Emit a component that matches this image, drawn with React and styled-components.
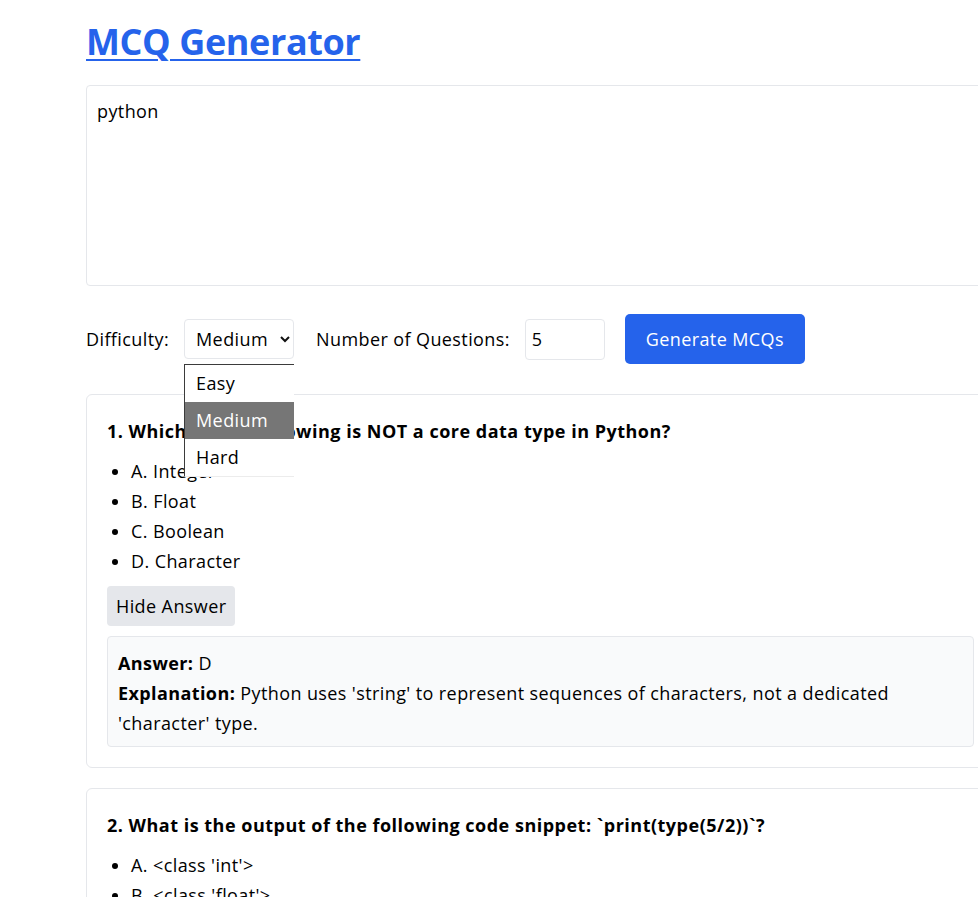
import React from "react";
import styled, { createGlobalStyle } from "styled-components";

const Global = createGlobalStyle`
  html, body { margin: 0; padding: 0; background: #ffffff; }
  body {
    font-family: "Open Sans", "Noto Sans", "DejaVu Sans", sans-serif;
    color: #000000;
    overflow: hidden;
  }
  * { box-sizing: border-box; }
`;

const Page = styled.main`
  width: 909px;
  margin-left: 86px;
  padding-top: 20px;
  font-size: 18px;
  line-height: 30px;
  letter-spacing: 0.4px;
`;

const Title = styled.h1`
  margin: 0 0 21px;
  font-size: 36px;
  line-height: 44px;
  font-weight: 700;
  letter-spacing: -0.4px;
`;

const TitleLink = styled.a`
  color: #2563eb;
  text-decoration: underline;
  text-decoration-thickness: 2px;
  text-underline-offset: 4px;
`;

const TopicInput = styled.textarea`
  display: block;
  width: 100%;
  height: 201px;
  padding: 10px;
  border: 1px solid #e5e7eb;
  border-radius: 4px;
  font: inherit;
  font-size: 18px;
  line-height: 30px;
  letter-spacing: inherit;
  color: #000;
  resize: none;
  outline: none;
`;

const Controls = styled.div`
  display: flex;
  align-items: center;
  height: 50px;
  margin-top: 28px;
`;

const Label = styled.label`
  font-size: 18px;
  margin-right: 15px;
  white-space: nowrap;
`;

const SelectWrap = styled.div`
  position: relative;
  width: 110px;
  height: 40px;
  margin-right: 22px;
`;

const Select = styled.select`
  appearance: none;
  width: 100%;
  height: 100%;
  padding: 0 0 0 11px;
  border: 1px solid #e5e7eb;
  border-radius: 4px;
  background: #fff;
  font: inherit;
  font-size: 18px;
  letter-spacing: inherit;
  color: #000;
  outline: none;
`;

const Chevron = styled.svg`
  position: absolute;
  right: 3px;
  top: 16px;
  pointer-events: none;
`;

const OptionList = styled.ul`
  position: absolute;
  top: 45px;
  left: 0;
  width: 110px;
  margin: 0;
  padding: 0;
  list-style: none;
  background: #fff;
  border-top: 1px solid #3b3b3b;
  border-left: 1px solid #3b3b3b;
  border-bottom: 1px solid #ececec;
  z-index: 10;
`;

const OptionItem = styled.li`
  height: 37px;
  line-height: 37px;
  padding-left: 11px;
  font-size: 18px;
  background: ${(p) => (p.$active ? "#767676" : "#ffffff")};
  color: ${(p) => (p.$active ? "#ffffff" : "#000000")};
`;

const NumberInput = styled.input`
  width: 80px;
  height: 41px;
  margin-right: 20px;
  padding: 0 0 0 6px;
  border: 1px solid #e5e7eb;
  border-radius: 4px;
  font: inherit;
  font-size: 18px;
  letter-spacing: inherit;
  color: #000;
  outline: none;
`;

const PrimaryButton = styled.button`
  width: 180px;
  height: 50px;
  border: none;
  border-radius: 5px;
  background: #2563eb;
  color: #ffffff;
  font: inherit;
  font-size: 18px;
  letter-spacing: inherit;
`;

const Cards = styled.div`
  display: flex;
  flex-direction: column;
  gap: 20px;
  margin-top: 30px;
`;

const Card = styled.section`
  border: 1px solid #e5e7eb;
  border-radius: 6px;
  padding: 20px;
`;

const Question = styled.h3`
  margin: 1px 0 10px;
  font-size: 18px;
  line-height: 30px;
  font-weight: 700;
  letter-spacing: 0.5px;
`;

const Choices = styled.ul`
  margin: 0 0 10px;
  padding-left: 24px;
`;

const Choice = styled.li`
  line-height: 30px;
`;

const ToggleButton = styled.button`
  display: block;
  height: 40px;
  padding: 0 9px;
  border: none;
  border-radius: 4px;
  background: #e5e7eb;
  color: #000;
  font: inherit;
  font-size: 18px;
  letter-spacing: inherit;
`;

const AnswerBox = styled.div`
  margin-top: 10px;
  padding: 11px 10px 8px;
  border: 1px solid #e5e7eb;
  border-radius: 4px;
  background: #f9fafb;
`;

const AnswerLine = styled.div`
  line-height: 30px;
`;

const questions = [
  {
    q: "1. Which of the following is NOT a core data type in Python?",
    options: ["A. Integer", "B. Float", "C. Boolean", "D. Character"],
    open: true,
    answer: "D",
    explanation:
      "Python uses 'string' to represent sequences of characters, not a dedicated 'character' type.",
  },
  {
    q: "2. What is the output of the following code snippet: `print(type(5/2))`?",
    options: ["A. <class 'int'>", "B. <class 'float'>", "C. <class 'double'>", "D. <class 'decimal'>"],
    open: false,
  },
];

export default function App() {
  return (
    <>
      <Global />
      <Page>
        <Title>
          <TitleLink href="#">MCQ Generator</TitleLink>
        </Title>
        <TopicInput defaultValue="python" />
        <Controls>
          <Label>Difficulty:</Label>
          <SelectWrap>
            <Select defaultValue="medium">
              <option value="easy">Easy</option>
              <option value="medium">Medium</option>
              <option value="hard">Hard</option>
            </Select>
            <Chevron width="12" height="8" viewBox="0 0 12 8">
              <polyline points="2,2 6,6 10,2" fill="none" stroke="#111" strokeWidth="2" />
            </Chevron>
            <OptionList>
              <OptionItem>Easy</OptionItem>
              <OptionItem $active>Medium</OptionItem>
              <OptionItem>Hard</OptionItem>
            </OptionList>
          </SelectWrap>
          <Label>Number of Questions:</Label>
          <NumberInput type="text" defaultValue="5" />
          <PrimaryButton>Generate MCQs</PrimaryButton>
        </Controls>
        <Cards>
          {questions.map((item) => (
            <Card key={item.q}>
              <Question>{item.q}</Question>
              <Choices>
                {item.options.map((o) => (
                  <Choice key={o}>{o}</Choice>
                ))}
              </Choices>
              <ToggleButton>{item.open ? "Hide Answer" : "Show Answer"}</ToggleButton>
              {item.open && (
                <AnswerBox>
                  <AnswerLine>
                    <strong>Answer:</strong> {item.answer}
                  </AnswerLine>
                  <AnswerLine>
                    <strong>Explanation:</strong> {item.explanation}
                  </AnswerLine>
                </AnswerBox>
              )}
            </Card>
          ))}
        </Cards>
      </Page>
    </>
  );
}
